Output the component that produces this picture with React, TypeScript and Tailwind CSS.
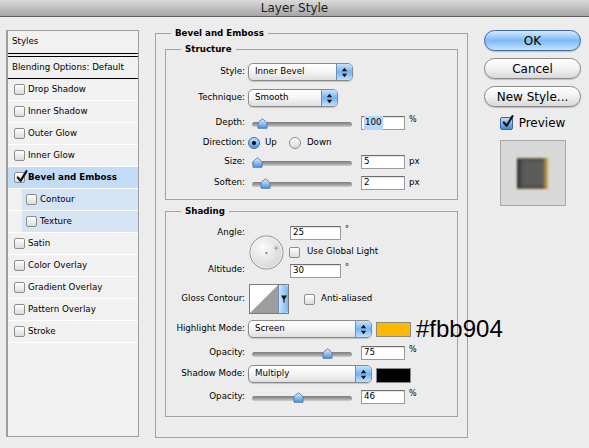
import type { ReactNode } from 'react';

type StyleItem = { name: string; checked?: boolean; active?: boolean; sub?: boolean };

const styleItems: StyleItem[] = [
  { name: 'Drop Shadow' },
  { name: 'Inner Shadow' },
  { name: 'Outer Glow' },
  { name: 'Inner Glow' },
  { name: 'Bevel and Emboss', checked: true, active: true },
  { name: 'Contour', sub: true },
  { name: 'Texture', sub: true },
  { name: 'Satin' },
  { name: 'Color Overlay' },
  { name: 'Gradient Overlay' },
  { name: 'Pattern Overlay' },
  { name: 'Stroke' },
];

const CheckBox = ({ checked = false, blue = false }: { checked?: boolean; blue?: boolean }) => (
  <span
    className={`relative inline-block align-middle shrink-0 rounded-[2px] border ${
      blue
        ? 'w-[13px] h-[13px] border-[#3f6696] bg-linear-to-b from-[#b9dcfd] to-[#3f8ae0]'
        : 'w-[11px] h-[11px] border-[#8d8d8d] bg-linear-to-b from-white to-[#dcdcdc]'
    }`}
  >
    {checked && (
      <svg className="absolute left-[1px] -top-[3px]" width="12" height="13" viewBox="0 0 12 13">
        <path
          d="M1.8 7.5 L4.6 10.8 L10.5 1.2"
          fill="none"
          stroke="#111"
          strokeWidth="2.2"
          strokeLinecap="round"
          strokeLinejoin="round"
        />
      </svg>
    )}
  </span>
);

const Radio = ({ on = false }: { on?: boolean }) => (
  <span
    className={`shrink-0 w-[12px] h-[12px] rounded-full border flex items-center justify-center ${
      on
        ? 'border-[#3f6ea3] bg-linear-to-b from-[#c4e3ff] to-[#4a95e8]'
        : 'border-[#8d8d8d] bg-linear-to-b from-white to-[#dadada]'
    }`}
  >
    {on && <span className="w-[4px] h-[4px] rounded-full bg-black" />}
  </span>
);

const Popup = ({ width, label }: { width: string; label: string }) => (
  <div
    className={`${width} h-[18px] shrink-0 flex rounded-[5px] border border-[#8a8a8a] bg-linear-to-b from-white via-[#f4f4f4] to-[#dedede] shadow-[0_1px_1px_rgba(0,0,0,0.18)] overflow-hidden`}
  >
    <span className="flex-1 pl-[6px] flex items-center">{label}</span>
    <span className="w-[16px] flex items-center justify-center border-l border-[#6f8fb4] bg-linear-to-b from-[#c6e2fd] via-[#74b3f0] to-[#bfe0fd]">
      <svg width="7" height="11" viewBox="0 0 7 11">
        <path d="M3.5 0.8 L6.2 4.2 L0.8 4.2 Z M0.8 6.8 L6.2 6.8 L3.5 10.2 Z" fill="#111" />
      </svg>
    </span>
  </div>
);

const Field = ({ value, width = 'w-[44px]', selected = false }: { value: string; width?: string; selected?: boolean }) => (
  <div
    className={`${width} h-[14px] shrink-0 bg-white border border-[#9a9a9a] border-t-[#6e6e6e] shadow-[inset_0_1px_1px_rgba(0,0,0,0.12)] flex items-center pl-[2px]`}
  >
    <span className={selected ? 'bg-[#b6d6fc] px-[1px]' : ''}>{value}</span>
  </div>
);

const Slider = ({ pct }: { pct: number }) => (
  <div className="relative shrink-0 w-[100px] h-[11px] ml-[7px]">
    <div className="absolute left-0 right-0 top-[4px] h-[5px] rounded-full bg-linear-to-b from-[#7d7d7d] via-[#9c9c9c] to-[#d0d0d0]" />
    <svg className="absolute top-0" style={{ left: `calc(${pct}% - 5px)` }} width="11" height="11" viewBox="0 0 11 11">
      <defs>
        <linearGradient id="thumb" x1="0" y1="0" x2="0" y2="1">
          <stop offset="0" stopColor="#dff0ff" />
          <stop offset="1" stopColor="#4a92e0" />
        </linearGradient>
      </defs>
      <path d="M1 10.3 V5.4 Q1 4.4 2 3.6 L5.5 0.8 L9 3.6 Q10 4.4 10 5.4 V10.3 Z" fill="url(#thumb)" stroke="#4a6f9c" strokeWidth="0.8" />
    </svg>
  </div>
);

const Label = ({ children }: { children: ReactNode }) => (
  <span className="w-[79px] shrink-0 text-right">{children}</span>
);

const Unit = ({ children, top = false }: { children: ReactNode; top?: boolean }) => (
  <span className={`ml-[4px] ${top ? 'self-start -mt-[2px] text-[8px]' : ''}`}>{children}</span>
);

const SliderRow = ({ label, pct, value, unit, selected, mt }: { label: string; pct: number; value: string; unit: string; selected?: boolean; mt: string }) => (
  <div className={`flex items-center h-[14px] ${mt}`}>
    <Label>{label}</Label>
    <Slider pct={pct} />
    <span className="ml-[9px]">
      <Field value={value} selected={selected} />
    </span>
    <Unit top={unit === '%'}>{unit}</Unit>
  </div>
);

const Legend = ({ children, inset }: { children: ReactNode; inset: string }) => (
  <legend className={`${inset} px-[4px] h-[13px] leading-[13px] font-bold`}>{children}</legend>
);

const Dial = () => (
  <svg width="35" height="35" viewBox="0 0 36 36" className="shrink-0 ml-[4px] mt-[9px]">
    <defs>
      <radialGradient id="dial" cx="0.4" cy="0.35" r="0.75">
        <stop offset="0" stopColor="#fbfbfb" />
        <stop offset="1" stopColor="#d2d2d2" />
      </radialGradient>
    </defs>
    <circle cx="18" cy="18" r="17" fill="url(#dial)" stroke="#8c8c8c" />
    <circle cx="18" cy="18" r="16" fill="none" stroke="#ffffff" strokeWidth="0.6" />
    <circle cx="18" cy="18.5" r="1.1" fill="#7a7a7a" />
    <path d="M28 11 v5 M25.5 13.5 h5" stroke="#8a8a8a" strokeWidth="0.8" />
  </svg>
);

const ContourPicker = () => (
  <div className="w-[40px] h-[30px] ml-[4px] flex border border-[#7b7b7b] shrink-0">
    <svg width="28" height="28" viewBox="0 0 28 28">
      <rect width="28" height="28" fill="#fff" />
      <path d="M0 28 L28 0 V28 Z" fill="#9d9d9d" />
    </svg>
    <div className="flex-1 border-l border-[#6f8fb4] bg-linear-to-r from-[#cbe5fd] to-[#7ab6ef] rounded-r-[3px] flex justify-center pt-[9px]">
      <svg width="6" height="9" viewBox="0 0 6 9">
        <path d="M0 1.5 H6 L3.6 5.6 V8.5 H2.4 V5.6 Z" fill="#111" />
      </svg>
    </div>
  </div>
);

const AquaButton = ({ children, primary = false }: { children: ReactNode; primary?: boolean }) => (
  <div
    className={`h-[21px] rounded-full border flex items-center justify-center text-[12px] shadow-[0_1px_1px_rgba(0,0,0,0.2)] ${
      primary
        ? 'border-[#3d6aa3] bg-linear-to-b from-[#d4eaff] via-[#7db9f3] to-[#c3e3ff]'
        : 'border-[#8a8a8a] bg-linear-to-b from-white via-[#f1f1f1] to-[#d9d9d9]'
    }`}
  >
    {children}
  </div>
);

const StylesList = () => (
  <div className="mt-[13px] w-[133px] h-[407px] shrink-0 border border-l-2 border-[#9f9f9f] bg-[#f1f1f1]">
    <div className="h-[23px] border-b border-black flex items-center pl-[4px]">Styles</div>
    <div className="mt-[2px] h-[23px] border-y border-black flex items-center pl-[4px]">Blending Options: Default</div>
    {styleItems.map((item) => (
      <div key={item.name} className="h-[22px] border-b border-white flex">
        <div
          className={`flex-1 flex items-center gap-[3px] ${item.sub ? 'ml-[14px] pl-[4px] bg-[#d4e4f5]' : 'pl-[6px]'} ${
            item.active ? 'bg-[#c2dbf6] font-bold' : ''
          }`}
        >
          <CheckBox checked={item.checked} />
          <span>{item.name}</span>
        </div>
      </div>
    ))}
  </div>
);

export default function App() {
  return (
    <div className="w-[589px] h-[448px] overflow-hidden bg-[#ececec] text-[8.7px] text-black font-['DejaVu_Sans',sans-serif]">
      <div className="h-[17px] border-b border-[#5e5e5e] bg-linear-to-b from-[#dadada] via-[#c0c0c0] to-[#a6a6a6] flex items-center justify-center text-[12px] text-[#1e1e1e]">
        Layer Style
      </div>

      <div className="flex items-start pl-[6px]">
        <StylesList />

        <fieldset className="ml-[16px] mt-[10px] w-[313px] h-[411px] min-w-0 shrink-0 border border-[#a2a2a2] pl-[9px]">
          <Legend inset="ml-[6px]">Bevel and Emboss</Legend>

          <fieldset className="mt-[3px] w-[293px] h-[157px] min-w-0 border border-[#a2a2a2]">
            <Legend inset="ml-[15px]">Structure</Legend>
            <div className="flex items-center h-[18px] mt-[7px]">
              <Label>Style:</Label>
              <span className="ml-[3px]">
                <Popup width="w-[105px]" label="Inner Bevel" />
              </span>
            </div>
            <div className="flex items-center h-[18px] mt-[8px]">
              <Label>Technique:</Label>
              <span className="ml-[3px]">
                <Popup width="w-[90px]" label="Smooth" />
              </span>
            </div>
            <SliderRow label="Depth:" pct={10} value="100" unit="%" selected mt="mt-[9px]" />
            <div className="flex items-center h-[14px] mt-[6px]">
              <Label>Direction:</Label>
              <span className="ml-[3px]">
                <Radio on />
              </span>
              <span className="ml-[5px]">Up</span>
              <span className="ml-[12px]">
                <Radio />
              </span>
              <span className="ml-[6px]">Down</span>
            </div>
            <SliderRow label="Size:" pct={5} value="5" unit="px" mt="mt-[5px]" />
            <SliderRow label="Soften:" pct={13} value="2" unit="px" mt="mt-[7px]" />
          </fieldset>

          <fieldset className="mt-[5px] w-[293px] h-[212px] min-w-0 border border-[#a2a2a2]">
            <Legend inset="ml-[15px]">Shading</Legend>

            <div className="flex h-[52px] mt-[8px]">
              <div className="w-[79px] shrink-0 flex flex-col justify-between items-end pb-[2px]">
                <span className="h-[13px] flex items-center">Angle:</span>
                <span className="h-[13px] flex items-center">Altitude:</span>
              </div>
              <Dial />
              <div className="ml-[6px] flex flex-col">
                <div className="flex">
                  <Field value="25" width="w-[51px]" />
                  <Unit top>°</Unit>
                </div>
                <div className="flex items-center mt-[6px] -ml-[1px] gap-[7px] h-[12px]">
                  <CheckBox />
                  <span>Use Global Light</span>
                </div>
                <div className="flex mt-[6px]">
                  <Field value="30" width="w-[51px]" />
                  <Unit top>°</Unit>
                </div>
              </div>
            </div>

            <div className="flex items-center h-[30px] mt-[6px]">
              <Label>Gloss Contour:</Label>
              <ContourPicker />
              <span className="ml-[15px] flex">
                <CheckBox />
              </span>
              <span className="ml-[6px]">Anti-aliased</span>
            </div>

            <div className="flex items-center h-[18px] mt-[6px]">
              <Label>Highlight Mode:</Label>
              <span className="ml-[3px]">
                <Popup width="w-[124px]" label="Screen" />
              </span>
              <span className="ml-[4px] w-[35px] h-[15px] shrink-0 border border-[#8a8a8a] bg-[#fbb904]" />
              <span className="ml-[5px] shrink-0 whitespace-nowrap text-[24px] leading-none font-['Liberation_Sans',sans-serif]">
                #fbb904
              </span>
            </div>

            <SliderRow label="Opacity:" pct={75} value="75" unit="%" mt="mt-[8px]" />

            <div className="flex items-center h-[18px] mt-[5px]">
              <Label>Shadow Mode:</Label>
              <span className="ml-[3px]">
                <Popup width="w-[124px]" label="Multiply" />
              </span>
              <span className="ml-[4px] mt-[3px] w-[35px] h-[15px] shrink-0 border border-[#8a8a8a] bg-black" />
            </div>

            <SliderRow label="Opacity:" pct={46} value="46" unit="%" mt="mt-[7px]" />
          </fieldset>
        </fieldset>

        <div className="ml-[16px] mt-[13px] w-[97px] shrink-0 flex flex-col">
          <AquaButton primary>OK</AquaButton>
          <div className="mt-[7px]">
            <AquaButton>Cancel</AquaButton>
          </div>
          <div className="mt-[7px]">
            <AquaButton>New Style...</AquaButton>
          </div>
          <div className="mt-[7px] flex items-center justify-center gap-[6px] text-[12px]">
            <CheckBox checked blue />
            <span>Preview</span>
          </div>
          <div className="mt-[8px] mx-auto w-[66px] h-[66px] border border-[#a8a8a8] bg-[#d8d8d8] flex items-center justify-center">
            <div className="w-[31px] h-[31px] bg-[#5c5c5c] blur-[0.8px] shadow-[inset_-3px_0_3px_#d5a843,inset_3px_0_4px_#2e2e2e,inset_0_-2px_3px_#404040,inset_0_2px_2px_#484848]" />
          </div>
        </div>
      </div>
    </div>
  );
}
